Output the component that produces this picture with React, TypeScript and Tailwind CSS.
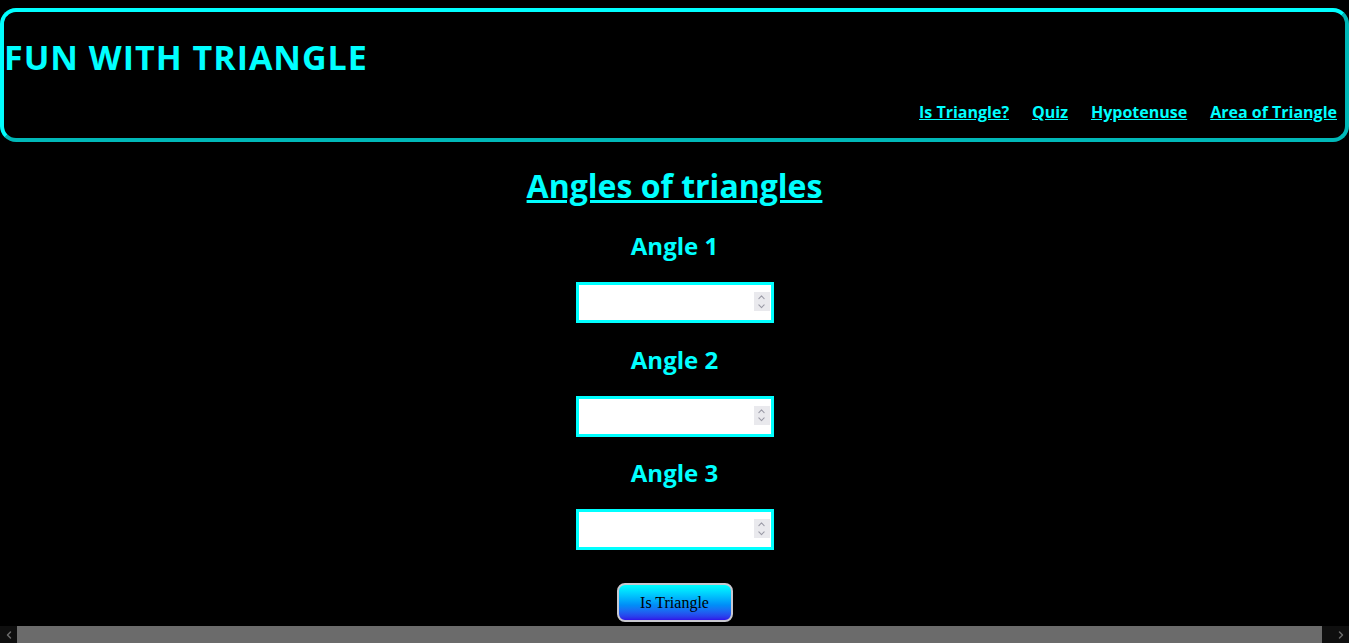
import React from "react";
import { ChevronUp, ChevronDown, ChevronLeft, ChevronRight } from "lucide-react";

const links = ["Is Triangle?", "Quiz", "Hypotenuse", "Area of Triangle"];
const angles = ["Angle 1", "Angle 2", "Angle 3"];

const comic = "font-['Comic_Sans_MS','Open_Sans',sans-serif]";

function AngleInput() {
  return (
    <div className="relative mt-[20px]">
      <input
        type="number"
        className="block w-[198px] h-[41px] border-[3px] border-[#00ffff] bg-white text-black px-1 [appearance:textfield] [&::-webkit-inner-spin-button]:appearance-none"
      />
      {/* spinner drawn over the field */}
      <div className="absolute right-[4px] top-[10px] w-[16px] h-[19px] bg-[#e9e9ed] flex flex-col items-center justify-center -space-y-[2px] text-[#9a9aa6]">
        <ChevronUp size={11} strokeWidth={2.5} />
        <ChevronDown size={11} strokeWidth={2.5} />
      </div>
    </div>
  );
}

export default function App() {
  return (
    <div className="relative h-screen overflow-hidden bg-black">
      <div className={`w-[1349px] pt-2 text-[#00ffff] ${comic}`}>
        <header className="h-[134px] rounded-[16px] border-4 border-[#00ffff] border-b-[#00b8b8] border-r-[#00b8b8] flex flex-col">
          <h1 className="mt-[23px] text-[34px] leading-[44px] font-bold tracking-[1px]">FUN WITH TRIANGLE</h1>
          <nav className="mt-auto mb-[14px] flex justify-end gap-[23px] pr-[8px] text-[16px] font-bold">
            {links.map((l) => (
              <a key={l} href="#" className="underline">
                {l}
              </a>
            ))}
          </nav>
        </header>

        <main className="flex flex-col items-center">
          <h2 className="mt-[22px] text-[32px] leading-[44px] font-bold underline">Angles of triangles</h2>
          {angles.map((a, i) => (
            <div key={a} className="flex flex-col items-center">
              <h3 className={`${i === 0 ? "mt-[22px]" : "mt-[20.5px]"} text-[24px] leading-[32px] font-bold`}>{a}</h3>
              <AngleInput />
            </div>
          ))}
          <button className="mt-[33px] w-[116px] h-[39px] rounded-[8px] border-2 border-[#c8c8d0] bg-gradient-to-b from-[#00ffff] to-[#3010e8] text-black text-[16px] font-['Liberation_Serif',serif]">
            Is Triangle
          </button>
        </main>
      </div>

      {/* horizontal scrollbar */}
      <div className="absolute bottom-0 left-0 right-0 h-[17px] bg-[#0f0f0f] flex items-center">
        <div className="w-[17px] h-full flex items-center justify-center text-[#6b6b6b]">
          <ChevronLeft size={12} strokeWidth={3} />
        </div>
        <div className="flex-1 h-full bg-[#6b6b6b]" />
        <div className="w-[10px] h-full" />
        <div className="w-[17px] h-full flex items-center justify-center text-[#6b6b6b]">
          <ChevronRight size={12} strokeWidth={3} />
        </div>
      </div>
    </div>
  );
}
